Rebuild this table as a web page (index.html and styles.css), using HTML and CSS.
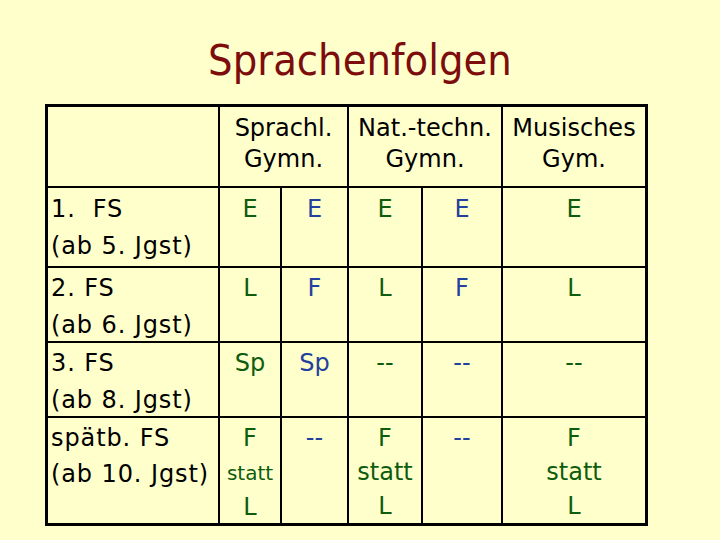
FILE: index.html
```html
<!DOCTYPE html>
<html lang="de">
<head>
<meta charset="utf-8">
<title>Sprachenfolgen</title>
<link rel="stylesheet" href="styles.css">
</head>
<body>
<div class="slide">
  <h1 class="title">Sprachenfolgen</h1>
  <div class="grid">
    <div class="cell head"></div>
    <div class="cell head span2">Sprachl.<br>Gymn.</div>
    <div class="cell head span2">Nat.-techn.<br>Gymn.</div>
    <div class="cell head">Musisches<br>Gym.</div>

    <div class="cell label">1.&nbsp; FS<br>(ab 5. Jgst)</div>
    <div class="cell val g">E</div>
    <div class="cell val b">E</div>
    <div class="cell val g">E</div>
    <div class="cell val b">E</div>
    <div class="cell val g">E</div>

    <div class="cell label r2">2. FS<br>(ab 6. Jgst)</div>
    <div class="cell val r2 g">L</div>
    <div class="cell val r2 b">F</div>
    <div class="cell val r2 g">L</div>
    <div class="cell val r2 b">F</div>
    <div class="cell val r2 g">L</div>

    <div class="cell label r2">3. FS<br>(ab 8. Jgst)</div>
    <div class="cell val r2 g">Sp</div>
    <div class="cell val r2 b">Sp</div>
    <div class="cell val r2 g">--</div>
    <div class="cell val r2 b">--</div>
    <div class="cell val r2 g">--</div>

    <div class="cell label r4">spätb. FS<br>(ab 10. Jgst)</div>
    <div class="cell val r4 g">F<br><span class="small">statt</span><br>L</div>
    <div class="cell val r4 b">--</div>
    <div class="cell val r4 g">F<br>statt<br>L</div>
    <div class="cell val r4 b">--</div>
    <div class="cell val r4 g">F<br>statt<br>L</div>
  </div>
</div>
</body>
</html>
```
FILE: styles.css
```css
html, body {
  margin: 0;
  padding: 0;
  background: #ffffcc;
}
.slide {
  width: 720px;
  height: 540px;
  background: #ffffcc;
  display: flex;
  flex-direction: column;
  align-items: flex-start;
  font-family: "DejaVu Sans", Verdana, sans-serif;
}
.title {
  margin: 32px 0 0 0;
  width: 720px;
  text-align: center;
  font-family: "DejaVu Sans Condensed", "DejaVu Sans", sans-serif;
  font-stretch: condensed;
  font-weight: normal;
  font-size: 43px;
  line-height: 56px;
  color: #7d0d0d;
  height: 72px;
}
.grid {
  margin-left: 45px;
  display: grid;
  grid-template-columns: 170px 60px 65px 72px 78px 142px;
  grid-template-rows: 79px 78px 73px 73px 105px;
  gap: 2px;
  padding: 3px;
  background: #000;
}
.cell {
  background: #ffffcc;
  font-size: 24px;
  color: #000;
}
.head {
  text-align: center;
  line-height: 31px;
  padding-top: 6px;
}
.span2 {
  grid-column: span 2;
}
.label {
  line-height: 37px;
  padding: 3px 0 0 3px;
  letter-spacing: 0.9px;
  white-space: nowrap;
}
.val {
  text-align: center;
  line-height: 37px;
  padding-top: 3px;
}
.r2 {
  padding-top: 2px;
}
.label.r4 {
  line-height: 36px;
  padding-top: 2px;
}
.val.r4 {
  line-height: 34px;
  padding-top: 3px;
}
.g {
  color: #0e5c0e;
}
.b {
  color: #22409e;
}
.small {
  font-size: 20px;
}
```
